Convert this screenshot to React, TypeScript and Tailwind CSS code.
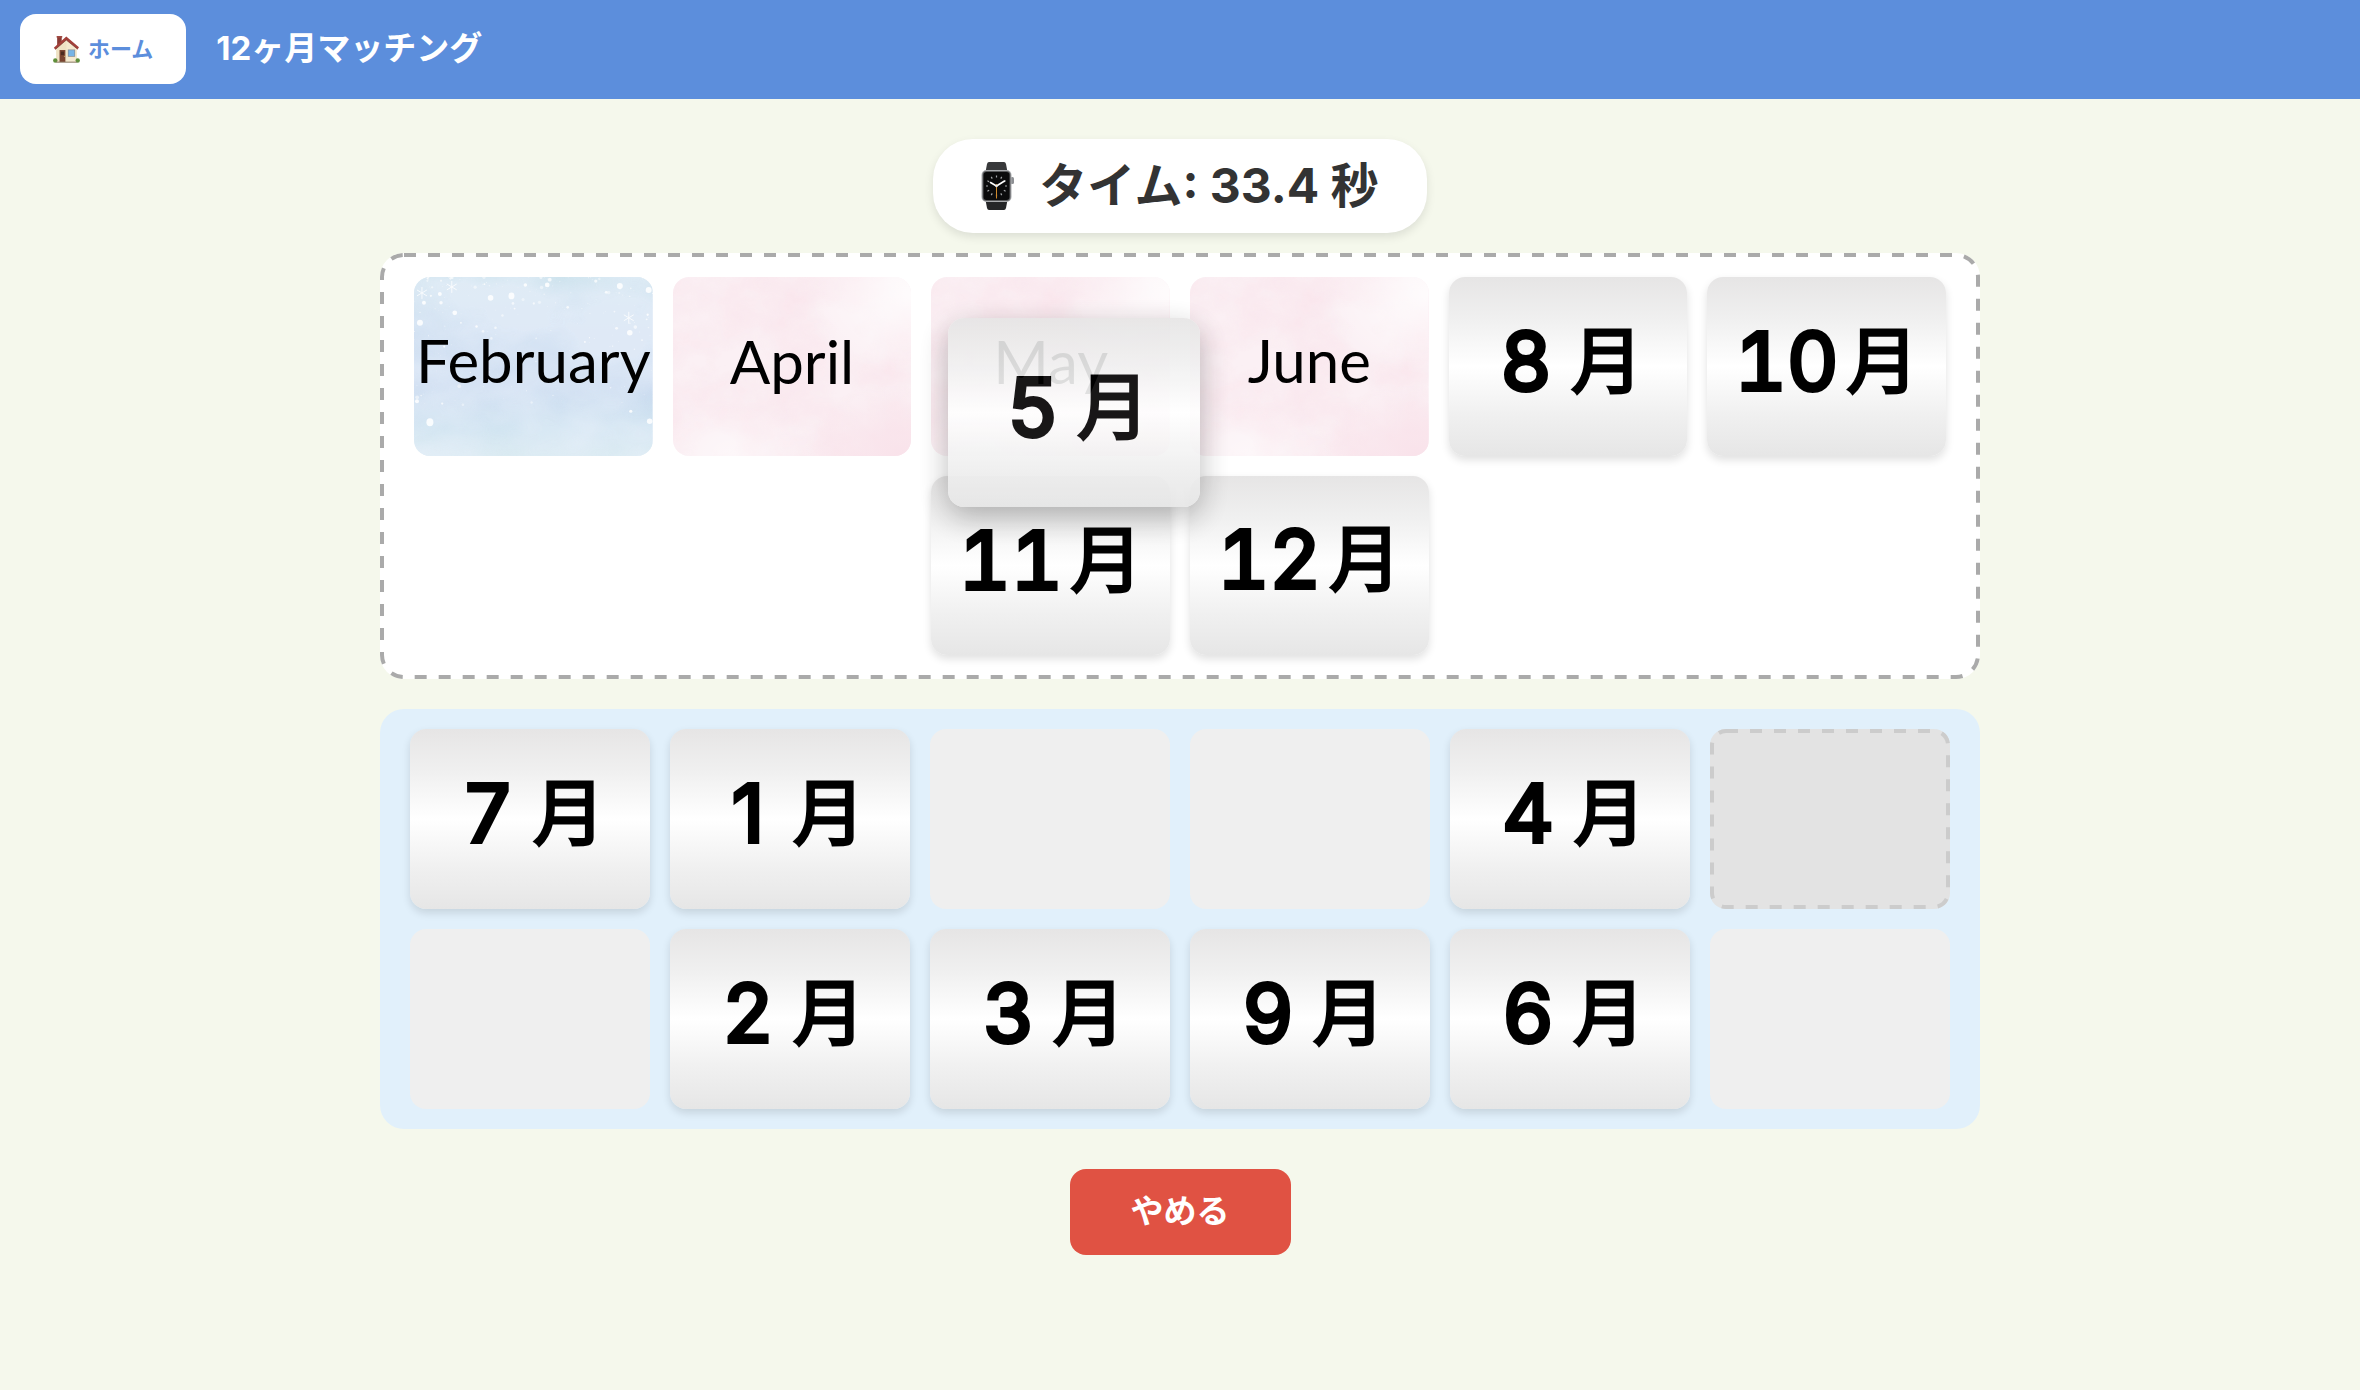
import React from 'react';

function House() {
  return (
    <svg viewBox="0 0 26 26" className="h-[27px] w-[27px] shrink-0" aria-hidden="true">
      <rect x="4" y="0.5" width="4.4" height="9" fill="#8a3a34" />
      <rect x="3.5" y="0" width="5.4" height="1.6" fill="#a14a42" />
      <path d="M3 11.5 13 2.5l10 9V25H3z" fill="#efe2c4" />
      <path d="M13 2.5 23 11.5V25H13z" fill="#f4e9cf" />
      <path d="M0.8 11.3 12.8 0.4 25 10.9l-1.200 1.900L12.800 3.900 2.200 13z" fill="#a3403a" />
      <path d="M2.2 13 12.8 3.900l11 8.900" fill="none" stroke="#6d2623" strokeWidth="0.6" />
      <rect x="6.3" y="13.500" width="5.600" height="11.500" fill="#7a4430" />
      <rect x="7.6" y="15" width="3" height="3.400" fill="#4c2a1e" />
      <circle cx="11" cy="19.600" r="0.500" fill="#e7c46a" />
      <rect x="14.3" y="13" width="7" height="7" fill="#8b8f96" />
      <rect x="15" y="13.700" width="5.600" height="5.600" fill="#77b4e6" />
      <circle cx="2.200" cy="23.600" r="2.100" fill="#5f8f3b" />
      <circle cx="23.800" cy="23.600" r="2.100" fill="#5f8f3b" />
      <rect x="3" y="24.700" width="20" height="1" fill="#8b7b65" />
    </svg>
  );
}

function Watch() {
  const marks = [0, 30, 60, 90, 120, 150, 180, 210, 240, 270, 300, 330];
  return (
    <svg viewBox="0 0 34 48" className="h-12 w-[34px] shrink-0" aria-hidden="true">
      <path d="M8 0h15q1.500 0 2 2l1.500 8h-22L6 2q.5-2 2-2z" fill="#38393b" />
      <path d="M8 48h15q1.500 0 2-2l1.500-8h-22L6 46q.5 2 2 2z" fill="#252628" />
      <rect x="29.500" y="15" width="3.500" height="7" rx="1.500" fill="#8e9094" />
      <rect x="0.500" y="8" width="30" height="32" rx="5" fill="#a9abae" />
      <rect x="1.500" y="9" width="28" height="30" rx="4" fill="#5a5b5d" />
      <rect x="2.500" y="10" width="26" height="28" rx="3" fill="#0b0b0c" />
      {marks.map((a) => (
        <path key={a} d="M15.500 13.500v2" stroke="#a5a7aa" strokeWidth="1.200" transform={`rotate(${a} 15.500 24)`} />
      ))}
      <path d="M15.500 22v14.500" stroke="#d08a2c" strokeWidth="1" />
      <path d="M9.500 20.500 15.500 24l8-5" fill="none" stroke="#fff" strokeWidth="1.600" strokeLinecap="round" />
      <circle cx="15.500" cy="24" r="1.200" fill="#e8e8e8" />
    </svg>
  );
}

function seeded(seed: number) {
  let s = seed;
  return () => {
    s = (s * 16807) % 2147483647;
    return s / 2147483647;
  };
}

const rand = seeded(421);
const flakes = Array.from({ length: 230 }, () => ({
  x: rand() * 240,
  y: Math.pow(rand(), 1.7) * 130,
  r: 0.4 + Math.pow(rand(), 5) * 1.5,
  o: 0.35 + rand() * 0.5,
}));

function SnowArt() {
  return (
    <svg viewBox="0 0 240 180" preserveAspectRatio="none" className="absolute inset-0 size-full" aria-hidden="true">
      <defs>
        <linearGradient id="snow-sky" x1="0" y1="0" x2="0" y2="1">
          <stop offset="0" stopColor="#cbe2ec" />
          <stop offset="0.3" stopColor="#c9dbef" />
          <stop offset="0.6" stopColor="#c8d9ef" />
          <stop offset="0.85" stopColor="#cee3f0" />
          <stop offset="1" stopColor="#d6e9ef" />
        </linearGradient>
        <filter id="snow-cloud" x="0" y="0" width="100%" height="100%" colorInterpolationFilters="sRGB">
          <feTurbulence type="fractalNoise" baseFrequency="0.008 0.012" numOctaves="4" seed="8" />
          <feColorMatrix values="0 0 0 0 0.91  0 0 0 0 0.94  0 0 0 0 0.98  2.2 0 0 0 -0.5" />
        </filter>
      </defs>
      <rect width="240" height="180" fill="url(#snow-sky)" />
      <rect width="240" height="180" filter="url(#snow-cloud)" opacity="0.7" />
      {flakes.map((f, i) => (
        <circle key={i} cx={f.x} cy={f.y} r={f.r} fill="#fff" opacity={f.o} />
      ))}
      <g fill="#fff" opacity="0.85">
        <ellipse cx="98" cy="19" rx="3" ry="3.500" />
        <circle cx="77" cy="21" r="2.800" />
        <circle cx="112" cy="8" r="1.800" />
        <circle cx="134" cy="8" r="2.400" />
        <circle cx="207" cy="9" r="3" />
        <circle cx="236" cy="13" r="3" />
        <circle cx="6" cy="46" r="3" />
        <circle cx="26" cy="17" r="2" />
        <circle cx="10" cy="26" r="2" />
        <circle cx="41" cy="36" r="2.400" />
        <circle cx="217" cy="56" r="2.800" />
        <ellipse cx="16" cy="146" rx="3.500" ry="4" />
        <circle cx="237" cy="145" r="2.800" />
        <circle cx="3" cy="125" r="2" />
        <circle cx="218" cy="135" r="1.600" />
      </g>
      <g stroke="#fff" strokeWidth="1" opacity="0.8">
        <path d="M38 4v12M33 7l10 6M33 13l10-6M8 10v12M3 13l10 6M3 19l10-6M216 35v12M211 38l10 6M211 44l10-6" />
      </g>
    </svg>
  );
}

function BlossomArt({ id }: { id: string }) {
  return (
    <svg viewBox="0 0 240 180" preserveAspectRatio="none" className="absolute inset-0 size-full" aria-hidden="true">
      <defs>
        <filter id={`wash-${id}`} x="0" y="0" width="100%" height="100%" colorInterpolationFilters="sRGB">
          <feTurbulence type="fractalNoise" baseFrequency="0.014 0.018" numOctaves="5" seed="14" />
          <feColorMatrix values="0 0 0 0 0.976  0 0 0 0 0.87  0 0 0 0 0.905  2.4 0 0 0 -0.8" />
        </filter>
        <radialGradient id={`fade-${id}`} cx="1" cy="0.1" r="0.45">
          <stop offset="0" stopColor="#fff" stopOpacity="0.85" />
          <stop offset="1" stopColor="#fff" stopOpacity="0" />
        </radialGradient>
        <radialGradient id={`glow-${id}`} cx="0.25" cy="1" r="0.35">
          <stop offset="0" stopColor="#fff" stopOpacity="0.5" />
          <stop offset="1" stopColor="#fff" stopOpacity="0" />
        </radialGradient>
        <radialGradient id={`tint-${id}`} cx="0.95" cy="1" r="0.4">
          <stop offset="0" stopColor="#f9e2ea" />
          <stop offset="1" stopColor="#f9e2ea" stopOpacity="0" />
        </radialGradient>
      </defs>
      <rect width="240" height="180" fill="#fbf0f4" />
      <rect width="240" height="180" filter={`url(#wash-${id})`} opacity="0.5" />
      <rect width="240" height="180" fill={`url(#fade-${id})`} />
      <rect width="240" height="180" fill={`url(#glow-${id})`} />
      <rect width="240" height="180" fill={`url(#tint-${id})`} />
    </svg>
  );
}

function DashedOutline({ radius, className }: { radius: number; className: string }) {
  return (
    <svg className={`pointer-events-none absolute inset-0 size-full ${className}`} aria-hidden="true">
      <rect
        x="2"
        y="2"
        rx={radius}
        className="h-[calc(100%-4px)] w-[calc(100%-4px)]"
        fill="none"
        stroke="currentColor"
        strokeWidth="4"
        strokeDasharray="12 12"
      />
    </svg>
  );
}

function EnglishCard({ name, snow = false }: { name: string; snow?: boolean }) {
  return (
    <div className="relative flex aspect-[4/3] items-center justify-center overflow-hidden rounded-2xl">
      {snow ? <SnowArt /> : <BlossomArt id={name} />}
      <span className="relative pb-3 font-['Lato',sans-serif] text-[60px] leading-none text-black">{name}</span>
    </div>
  );
}

function MonthFace({ month }: { month: number }) {
  return (
    <span
      className={`flex items-center pb-3 font-['Inter','Noto_Sans_CJK_JP',sans-serif] leading-none text-black [-webkit-text-stroke:4px_black] ${
        month > 9 ? 'gap-2 tabular-nums' : 'gap-5 pl-2'
      }`}
    >
      <span className="min-w-[50px] text-center text-[80px]">{month}</span>
      <span className="text-[72px] [-webkit-text-stroke:3px_black]">月</span>
    </span>
  );
}

const faceStyle =
  'flex w-full aspect-[4/3] cursor-grab items-center justify-center rounded-2xl bg-[linear-gradient(180deg,#e6e5e5_0%,#f0f0f0_24%,#ffffff_50%,#f0f0f0_77%,#e6e6e6_100%)]';

function MonthCard({ month }: { month: number }) {
  return (
    <button type="button" className={`${faceStyle} shadow-[0_4px_8px_rgba(0,0,0,0.12)]`}>
      <MonthFace month={month} />
    </button>
  );
}

const tray: (number | 'empty' | 'lifted')[] = [7, 1, 'empty', 'empty', 4, 'lifted', 'empty', 2, 3, 9, 6, 'empty'];

export default function App() {
  return (
    <div className="min-h-screen bg-[#f5f8ec] font-['Inter','Noto_Sans_CJK_JP',sans-serif]">
      <header className="flex items-center gap-[30px] bg-[#5c8edc] px-5 pt-3.5 pb-[15px]">
        <button
          type="button"
          className="flex h-[70px] items-center gap-2 rounded-2xl bg-white px-[33px] text-[22px] font-bold text-[#5c8edc]"
        >
          <House />
          ホーム
        </button>
        <h1 className="text-[33px] font-bold text-white">12ヶ月マッチング</h1>
      </header>

      <main className="mx-auto flex max-w-[1600px] flex-col items-center pt-10">
        <div className="mb-5 flex h-[94px] items-center gap-6 rounded-[40px] bg-white px-12 text-[48px] font-bold text-[#333] shadow-[0_4px_10px_rgba(0,0,0,0.1)]">
          <Watch />
          <span>タイム: 33.4 秒</span>
        </div>

        <section className="relative grid w-full grid-cols-6 gap-5 rounded-3xl bg-white px-[34px] py-6">
          <DashedOutline radius={22} className="text-[#aaa]" />
          <EnglishCard name="February" snow />
          <EnglishCard name="April" />
          <div className="relative">
            <EnglishCard name="May" />
            <div className="absolute top-[41px] left-[17px] z-10 w-[252px] opacity-90">
              <button type="button" className={`${faceStyle} shadow-[0_10px_30px_rgba(0,0,0,0.3)]`}>
                <MonthFace month={5} />
              </button>
            </div>
          </div>
          <EnglishCard name="June" />
          <MonthCard month={8} />
          <MonthCard month={10} />
          <div className="col-start-3">
            <MonthCard month={11} />
          </div>
          <MonthCard month={12} />
        </section>

        <section className="mt-[30px] grid w-full grid-cols-6 gap-5 rounded-3xl bg-[#e1f0fb] px-[30px] py-5">
          {tray.map((slot, i) =>
            slot === 'empty' ? (
              <div key={i} className="aspect-[4/3] rounded-2xl bg-[#efefef]" />
            ) : slot === 'lifted' ? (
              <div key={i} className="relative aspect-[4/3] rounded-2xl bg-[#e3e3e3]">
                <DashedOutline radius={14} className="text-[#ccc]" />
              </div>
            ) : (
              <MonthCard key={i} month={slot} />
            ),
          )}
        </section>

        <button type="button" className="mt-10 h-[86px] rounded-2xl bg-[#e05243] px-[61px] text-[33px] font-bold text-white">
          やめる
        </button>
      </main>
    </div>
  );
}
